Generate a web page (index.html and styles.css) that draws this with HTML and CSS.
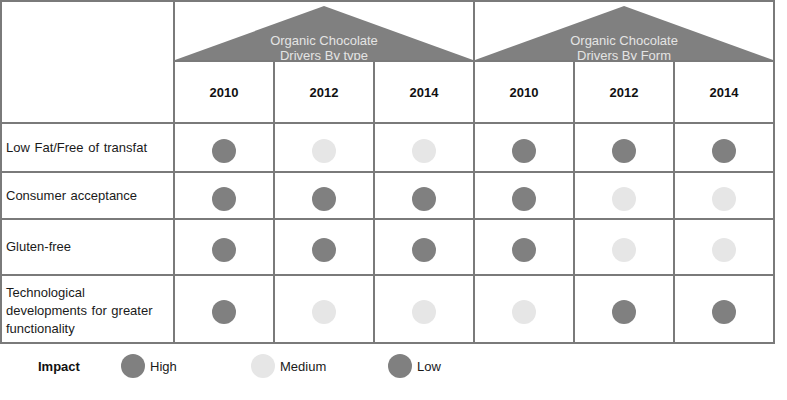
FILE: index.html
```html
<!DOCTYPE html>
<html lang="en">
<head>
<meta charset="utf-8">
<title>Organic Chocolate Drivers</title>
<link rel="stylesheet" href="styles.css">
</head>
<body>
<table class="matrix">
  <colgroup>
    <col class="col-label">
    <col class="col-year"><col class="col-year"><col class="col-year">
    <col class="col-year"><col class="col-year"><col class="col-year">
  </colgroup>
  <thead>
    <tr class="row-group">
      <th class="corner" rowspan="2"></th>
      <th class="group" colspan="3"><div class="tri"><span>Organic Chocolate<br>Drivers By type</span></div></th>
      <th class="group" colspan="3"><div class="tri"><span>Organic Chocolate<br>Drivers By Form</span></div></th>
    </tr>
    <tr class="row-years">
      <th>2010</th><th>2012</th><th>2014</th>
      <th>2010</th><th>2012</th><th>2014</th>
    </tr>
  </thead>
  <tbody>
    <tr class="r1">
      <td class="label">Low Fat/Free of transfat</td>
      <td class="dot"><span class="d hi"></span></td>
      <td class="dot"><span class="d md"></span></td>
      <td class="dot"><span class="d md"></span></td>
      <td class="dot"><span class="d hi"></span></td>
      <td class="dot"><span class="d hi"></span></td>
      <td class="dot"><span class="d hi"></span></td>
    </tr>
    <tr class="r2">
      <td class="label">Consumer acceptance</td>
      <td class="dot"><span class="d hi"></span></td>
      <td class="dot"><span class="d hi"></span></td>
      <td class="dot"><span class="d hi"></span></td>
      <td class="dot"><span class="d hi"></span></td>
      <td class="dot"><span class="d md"></span></td>
      <td class="dot"><span class="d md"></span></td>
    </tr>
    <tr class="r3">
      <td class="label">Gluten-free</td>
      <td class="dot"><span class="d hi"></span></td>
      <td class="dot"><span class="d hi"></span></td>
      <td class="dot"><span class="d hi"></span></td>
      <td class="dot"><span class="d hi"></span></td>
      <td class="dot"><span class="d md"></span></td>
      <td class="dot"><span class="d md"></span></td>
    </tr>
    <tr class="r4">
      <td class="label">Technological developments for greater functionality</td>
      <td class="dot"><span class="d hi"></span></td>
      <td class="dot"><span class="d md"></span></td>
      <td class="dot"><span class="d md"></span></td>
      <td class="dot"><span class="d md"></span></td>
      <td class="dot"><span class="d hi"></span></td>
      <td class="dot"><span class="d hi"></span></td>
    </tr>
  </tbody>
</table>
<div class="legend">
  <span class="legend-title">Impact</span>
  <span class="legend-item w1"><span class="d hi"></span>High</span>
  <span class="legend-item w2"><span class="d md"></span>Medium</span>
  <span class="legend-item"><span class="d hi"></span>Low</span>
</div>
</body>
</html>
```
FILE: styles.css
```css
* { box-sizing: border-box; }
html, body { margin: 0; padding: 0; background: #fff; }
body {
  font-family: "Liberation Sans", Arial, sans-serif;
  font-size: 13px;
  color: #1a1a1a;
  width: 787px;
  height: 400px;
  overflow: hidden;
}
.matrix {
  border-collapse: collapse;
  table-layout: fixed;
  width: 773px;
}
.col-label { width: 173px; }
.col-year { width: 100px; }
.matrix th, .matrix td {
  border: 2px solid #7a7a7a;
  padding: 0;
}
.row-group { height: 60px; }
.row-years { height: 62px; }
.r1 { height: 49px; }
.r2 { height: 47px; }
.r3 { height: 56px; }
.r4 { height: 68px; }
.matrix .group {
  padding-top: 4px;
  vertical-align: top;
  font-weight: normal;
}
.tri {
  height: 54px;
  background: #808080;
  clip-path: polygon(50% 0, 100% 100%, 0 100%);
  color: #e4e4e4;
  line-height: 15px;
  padding-top: 27px;
  text-align: center;
  overflow: hidden;
}
.row-years th {
  font-weight: bold;
  text-align: center;
  color: #111;
}
.matrix .label {
  padding: 0 18px 0 4px;
  vertical-align: middle;
  line-height: 18px;
  word-spacing: 1px;
}
.matrix .r4 .label { padding-top: 4px; }
.matrix .dot {
  text-align: center;
  vertical-align: middle;
  padding-top: 6px;
}
.d {
  display: inline-block;
  width: 24px;
  height: 24px;
  border-radius: 50%;
  vertical-align: middle;
}
.hi { background: #808080; }
.md { background: #e6e6e6; }
.legend {
  display: flex;
  align-items: center;
  margin-top: 10px;
  padding-left: 38px;
  height: 24px;
}
.legend-title {
  font-weight: bold;
  width: 83px;
  color: #111;
}
.legend-item {
  display: flex;
  align-items: center;
  gap: 5px;
}
.w1 { width: 130px; }
.w2 { width: 137px; }
```
